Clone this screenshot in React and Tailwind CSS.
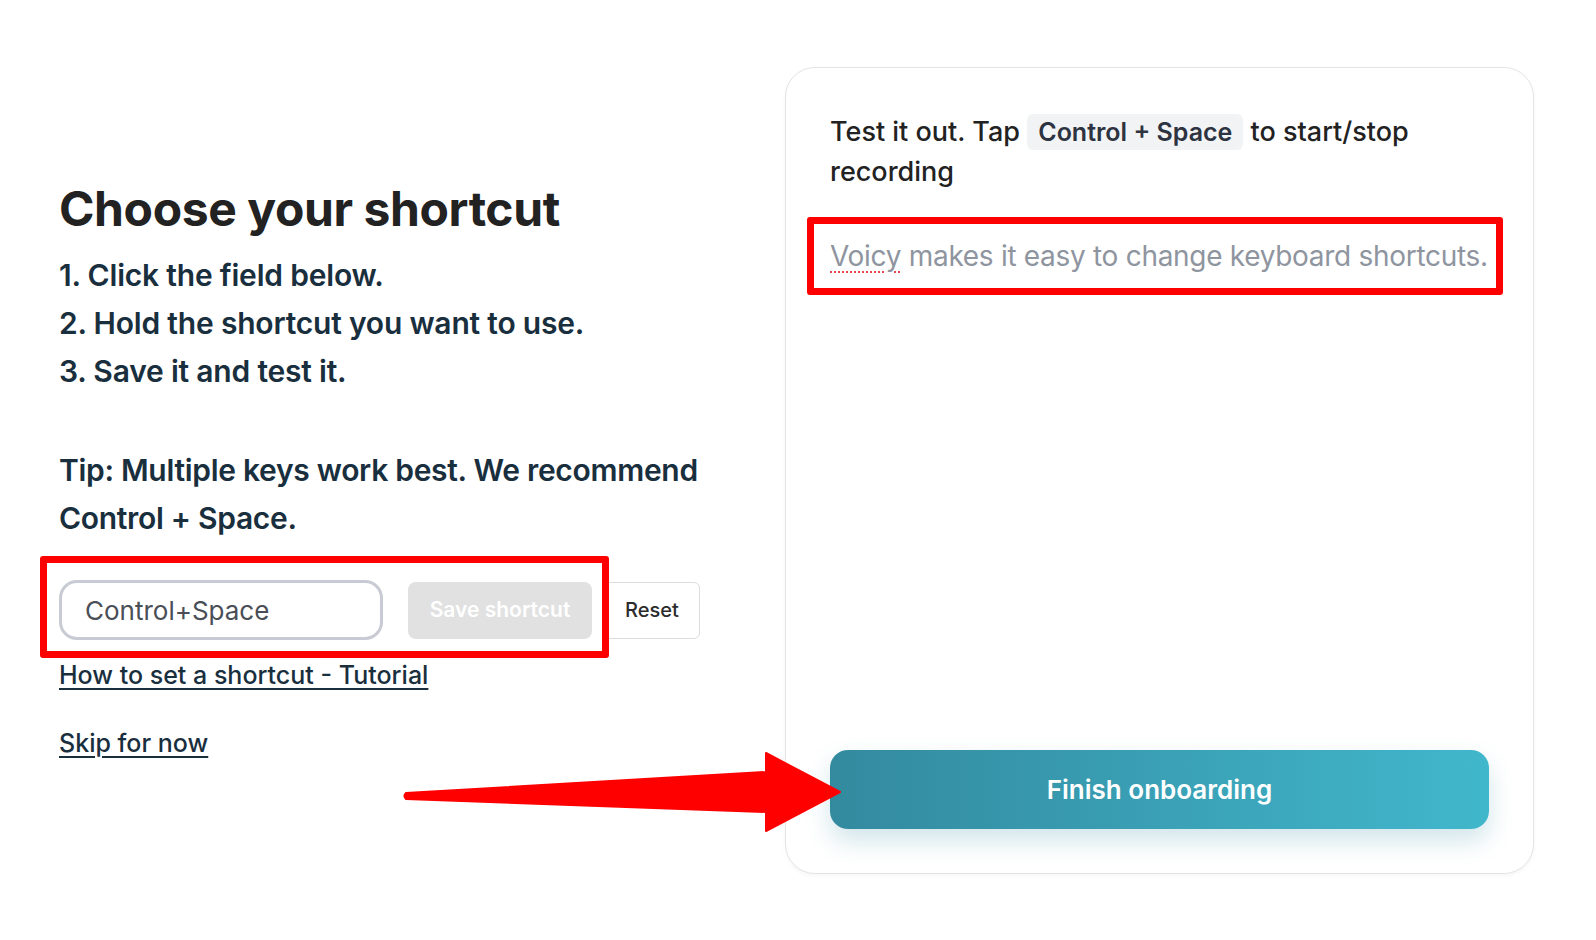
import React from "react";

const ArrowAnnotation = () => (
  <svg
    className="pointer-events-none absolute inset-0 h-full w-full"
    viewBox="0 0 1596 940"
    preserveAspectRatio="none"
  >
    <path
      d="M406 793 Q403 796 406 799 L766 812 L766 831 L840 792 L766 753 L766 772 Z"
      fill="#ff0000"
      stroke="#ff0000"
      strokeWidth="2"
      strokeLinejoin="round"
    />
  </svg>
);

const App = () => {
  return (
    <div
      className="relative flex h-[940px] w-full items-center bg-white pl-[59px] pr-[62px]"
      style={{ fontFamily: "Inter, 'Noto Sans', sans-serif" }}
    >
      {/* Left column */}
      <div className="w-[726px] shrink-0 pr-[26px]">
        <h1 className="text-[48px] font-bold leading-[56px] tracking-[-0.4px] text-[#222222]">
          Choose your shortcut
        </h1>

        <div className="mt-[14px] text-[30px] font-semibold leading-[48px] tracking-[-0.2px] text-[#1a2f3e]">
          <p>1. Click the field below.</p>
          <p>2. Hold the shortcut you want to use.</p>
          <p>3. Save it and test it.</p>
        </div>

        <p className="mt-[51px] text-[30px] font-semibold leading-[48px] tracking-[-0.3px] text-[#1a2f3e]">
          Tip: Multiple keys work best. We recommend Control + Space.
        </p>

        {/* Shortcut row */}
        <div className="relative mt-[38px] flex items-center">
          <div className="flex h-[60px] w-[324px] items-center rounded-[18px] border-[3px] border-[#c8cbd3] px-[23px] text-[26px] text-[#4a4e57]">
            Control+Space
          </div>
          <button className="ml-[25px] h-[57px] w-[184px] rounded-[8px] bg-[#e1e1e1] text-[21px] font-semibold text-white">
            Save shortcut
          </button>
          <button className="ml-[12px] h-[57px] w-[96px] rounded-[6px] border border-[#dcdcdc] bg-white text-[20px] font-medium text-[#2b2b2b]">
            Reset
          </button>
          {/* annotation */}
          <div className="pointer-events-none absolute -left-[19px] -top-[24px] h-[102px] w-[569px] rounded-[3px] border-[7px] border-[#ff0000]" />
        </div>

        <div className="mt-[19px] flex flex-col items-start gap-[36px] text-[25px] font-medium leading-[32px] text-[#1a2f3e]">
          <a href="#" className="underline decoration-[1.5px] underline-offset-[4px]">
            How to set a shortcut - Tutorial
          </a>
          <a href="#" className="underline decoration-[1.5px] underline-offset-[4px]">
            Skip for now
          </a>
        </div>
      </div>

      {/* Right card */}
      <div className="flex h-[807px] flex-1 flex-col rounded-[30px] border-[1.5px] border-[#e4e4e4] bg-white p-[44px] shadow-[0_2px_4px_rgba(0,0,0,0.04)]">
        <p className="text-[27px] font-medium leading-[40px] text-[#222222]">
          Test it out. Tap{" "}
          <span className="inline-block rounded-[6px] bg-[#f2f3f5] px-[11px] text-[25px] font-semibold leading-[36px] text-[#2d3340]">
            Control + Space
          </span>{" "}
          to start/stop recording
        </p>

        <div className="-ml-[23px] -mr-[14px] mt-[25px] rounded-[3px] border-[7px] border-[#ff0000] py-[12px] pl-[16px] text-[28px] leading-[40px] tracking-[-0.3px] whitespace-nowrap text-[#8f959f]">
          <span className="underline decoration-[#e5484d] decoration-dotted decoration-[2px] underline-offset-[6px]">
            Voicy
          </span>{" "}
          makes it easy to change keyboard shortcuts.
        </div>

        <button className="mt-auto h-[79px] w-full rounded-[18px] bg-linear-to-r from-[#338a9f] to-[#41b7cc] text-[26px] font-semibold text-white shadow-[0_12px_24px_rgba(51,138,160,0.22)]">
          Finish onboarding
        </button>
      </div>

      <ArrowAnnotation />
    </div>
  );
};

export default App;
